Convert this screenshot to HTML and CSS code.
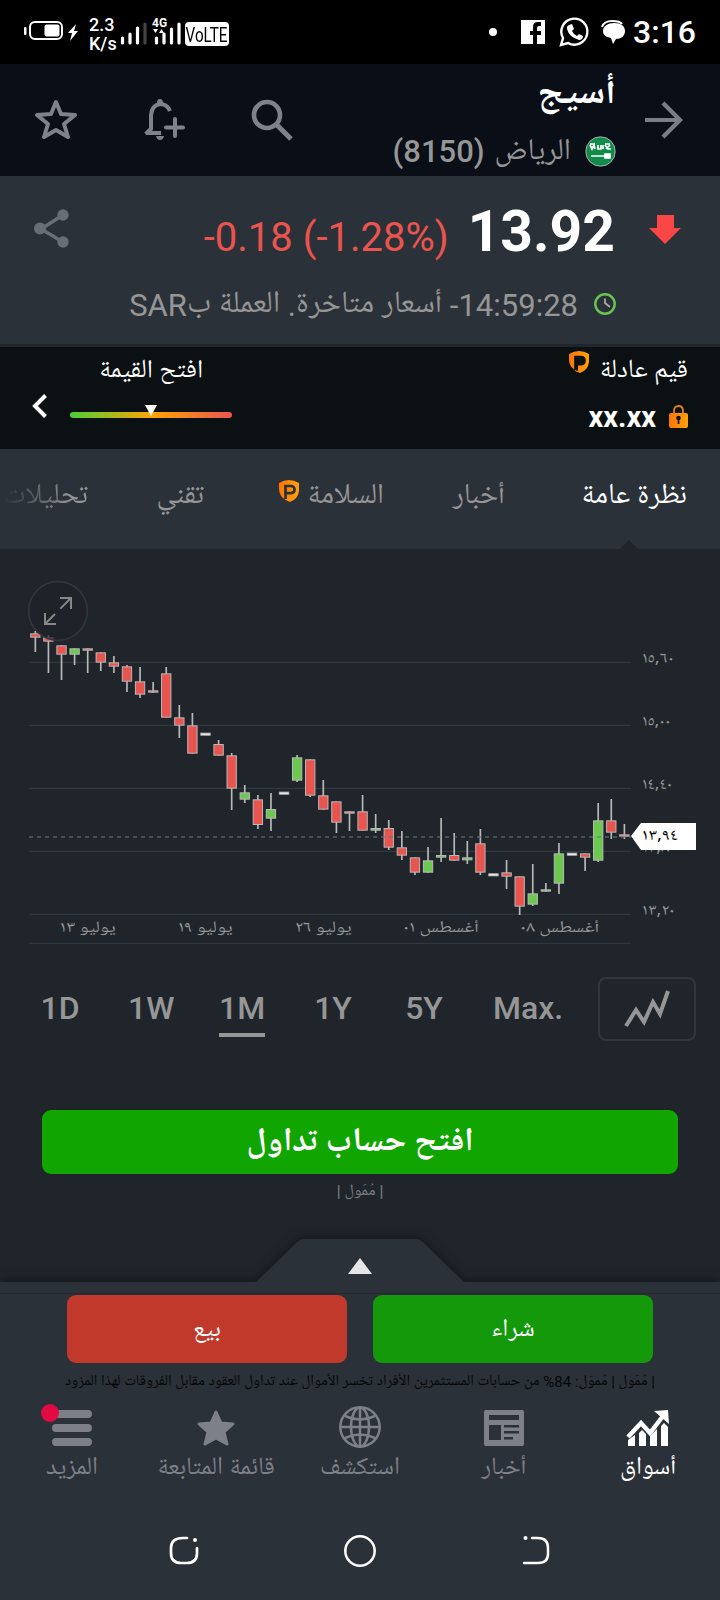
FILE: index.html
```
<!DOCTYPE html>
<html lang="ar" dir="rtl">
<head>
  <meta charset="UTF-8" />
  <meta name="viewport" content="width=device-width, initial-scale=1.0"/>
  <title>أسيج (8150)</title>
  <link rel="stylesheet" href="styles.css">
</head>
<body>
  <div class="status-bar">
    <span class="clock">3:16</span>
    <svg class="status-apps" width="142" height="34" viewBox="0 0 142 34">
      <circle cx="8" cy="17" r="4" fill="#fff"/>
      <path d="M36 5h24v24h-8v-9h4v-4h-4v-3q0-2 2-2h2V7h-3q-5 0-5 5v4h-3v4h3v9H36z" fill="#fff"/>
      <path d="M76 30l2-7a13 13 0 1 1 5 5z" fill="none" stroke="#fff" stroke-width="2.4"/>
      <path d="M84 10l3-1 2 5-2 2q2 4 5 5l2-2 4 2q0 4-4 4-10-3-12-11-.500-3 2-4z" fill="#fff"/>
      <path d="M117 12q2-6 10-6t10 3" fill="none" stroke="#fff" stroke-width="2"/>
      <path d="M129 8c7 0 11 3 11 8s-4 8-9 8l-3 5-2-6c-5-1-8-3-8-7 0-5 5-8 11-8z" fill="#fff"/>
    </svg>
    <div class="status-left">
      <svg width="58" height="34" viewBox="0 0 58 34">
        <rect x="1" y="12" width="2.500" height="8" rx="1" fill="#fff"/>
        <rect x="7" y="7" width="32" height="17" rx="5" fill="none" stroke="#fff" stroke-width="2"/>
        <rect x="21.500" y="9.500" width="15" height="12" rx="2" fill="#fff"/>
        <path d="M53 9l-8 9h4l-2 8 8-10h-4z" fill="#fff"/>
      </svg>
      <div class="speed"><span>2.3</span><span>K/s</span></div>
      <svg class="signal" width="62" height="34" viewBox="0 0 62 34">
        <path d="M2.500 22v5M10 18v9M17.500 12v15" stroke="#fff" stroke-width="3.200" stroke-linecap="round"/>
        <path d="M25 8v19" stroke="#444" stroke-width="3.200" stroke-linecap="round"/>
        <path d="M36.500 22v5M44 18v9M51.500 13v14M59 8v19" stroke="#fff" stroke-width="3.200" stroke-linecap="round"/>
        <path d="M33 13h5l-2.500 4zM39 17h5l-2.500-4z" fill="#fff"/>
        <text x="32" y="11" class="gen">4G</text>
      </svg>
      <span class="volte"><b>VoLTE</b></span>
    </div>
  </div>

  <header class="top-bar">
    <svg class="back" width="38" height="38" viewBox="0 0 38 38"><path d="M0 19h35M18 2l17 17-17 17" fill="none" stroke="#7a7f87" stroke-width="4.200"/></svg>
    <div class="name">
      <h1>أسيج</h1>
      <div class="market">
        <svg width="31" height="31" viewBox="0 0 31 31">
          <circle cx="15.500" cy="15.500" r="14.700" fill="#128a4a" stroke="#a9b0ac" stroke-width="1"/>
          <path d="M5 9l2 4 2-4 1 4M13 9v4h3v-4M18 9v4M20 9l3 4h3M21 13l4-4M5 8h5M20 8h5" stroke="#fff" stroke-width="1.700" fill="none"/>
          <path d="M6 20h19M20 18h5v4h-5z" stroke="#fff" stroke-width="1.700" fill="#fff"/>
        </svg>
        <span class="market-name">الرياض</span><span class="code" dir="ltr">(8150)</span>
      </div>
    </div>
    <div class="actions">
      <svg width="44" height="44" viewBox="0 0 44 44"><circle cx="17" cy="17" r="13" fill="none" stroke="#7e828a" stroke-width="4.600"/><path d="M27 27l14 14" stroke="#7e828a" stroke-width="5"/></svg>
      <svg width="44" height="44" viewBox="0 0 44 44" fill="none" stroke="#7e828a" stroke-width="4">
        <path d="M19 35H5l4-4V17q1-10 9-11 7 0 10 7" stroke-linejoin="round"/>
        <path d="M2 35l5-5v5z" fill="#7e828a" stroke="none"/>
        <path d="M15 5q0-4 3-4t3 4zM14 38h8q-1 4-4 4t-4-4z" fill="#7e828a" stroke="none"/>
        <path d="M33 21v17M24 29.500h17" stroke-linecap="round"/>
      </svg>
      <svg width="44" height="44" viewBox="0 0 44 44"><path d="M22 4l5 12 14 1-11 9 4 13-12-7-12 7 4-13-11-9 14-1z" fill="none" stroke="#7e828a" stroke-width="4" stroke-linejoin="round"/></svg>
    </div>
  </header>

  <section class="quote">
    <div class="quote-row">
      <svg class="down" width="32" height="29" viewBox="0 0 32 29"><path d="M8 0h17v13h7L16 29 0 13h8z" fill="#fb4646"/></svg>
      <span class="price">13.92</span>
      <span class="change" dir="ltr">-0.18 (-1.28%)</span>
      <svg class="share" width="36" height="40" viewBox="0 0 36 40"><path d="M29 6L7 20l22 13" fill="none" stroke="#696d75" stroke-width="3.500"/><circle cx="29" cy="6" r="5.700" fill="#696d75"/><circle cx="6" cy="19.500" r="6" fill="#696d75"/><circle cx="29" cy="33" r="5.700" fill="#696d75"/></svg>
    </div>
    <div class="time-row">
      <svg width="22" height="22" viewBox="0 0 22 22"><circle cx="11" cy="11" r="9.700" fill="none" stroke="#69c553" stroke-width="2.400"/><path d="M11 5.500V10l5 4" fill="none" stroke="#a5aaa5" stroke-width="1.800"/></svg>
      <span class="time-text">14:59:28- أسعار متاخرة. العملة بSAR</span>
    </div>
  </section>

  <section class="fair">
    <div class="fair-value">
      <div class="fair-title"><span>قيم عادلة</span>
        <svg class="pro" width="20" height="22" viewBox="0 0 20 22"><path d="M0 3q10-6 20 0v8q-1 8-9 11l-5-2V5h6q4 0 4 4t-4 4H9v7l-3-1Q0 15 0 9z" fill="url(#gold)" fill-rule="evenodd"/><path d="M6.500 19V6h5q4 0 4 3.600t-4 3.600h-5" fill="none" stroke="#0b1013" stroke-width="2.700"/></svg>
      </div>
      <div class="fair-price">
        <svg width="19" height="24" viewBox="0 0 19 24"><path d="M5 9V6q0-5 4.500-5T14 6v3" fill="none" stroke="#e57f10" stroke-width="1.800"/><rect y="8" width="19" height="15" rx="2" fill="url(#gold)"/><path d="M9.500 13v6" stroke="#0b1013" stroke-width="1.800"/><circle cx="9.500" cy="13" r="2.300" fill="#0b1013"/></svg>
        <span dir="ltr">xx.xx</span>
      </div>
    </div>
    <div class="unlock">
      <span>افتح القيمة</span>
      <div class="scale"><i class="marker"></i></div>
    </div>
    <svg class="chevron" width="16" height="24" viewBox="0 0 16 24"><path d="M13.500 1.500L3 12l10.500 10.500" fill="none" stroke="#fff" stroke-width="4"/></svg>
  </section>

  <nav class="tabs">
    <a class="tab active">نظرة عامة</a>
    <a class="tab news">أخبار</a>
    <a class="tab health">السلامة
      <svg class="pro" width="20" height="22" viewBox="0 0 20 22"><defs><linearGradient id="gold"><stop stop-color="#fd7506"/><stop offset="1" stop-color="#ffa10a"/></linearGradient></defs><path d="M0 3q10-6 20 0v8q-1 8-9 11Q0 18 0 9z" fill="url(#gold)"/><path d="M6.500 19V6h5q4 0 4 3.600t-4 3.600h-5" fill="none" stroke="#2b3138" stroke-width="2.700"/></svg>
    </a>
    <a class="tab tech">تقني</a>
    <a class="tab analysis">تحليلات</a>
  </nav>

  <main>
    <svg class="chart" width="720" height="390" viewBox="0 0 2160 1170">
      <g id="grid"></g>
      <g id="candles"></g>
      <path d="M87 801H1893" stroke="#6b7074" stroke-opacity=".75" stroke-width="5" stroke-dasharray="12 12"/>
      <g id="labels"></g>
      <path d="M1893 798l30-39h165v81h-165z" fill="#fff"/>
      <text x="1926" y="816" class="axis current" direction="ltr" textLength="108" lengthAdjust="spacingAndGlyphs">١٣,٩٤</text>
      <circle cx="174" cy="123" r="88" class="expand"/>
      <path d="M180 84h33v33M213 84l-32 32M135 129v33h33M135 162l30-30" fill="none" stroke="#878787" stroke-width="6"/>
    </svg>

    <div class="ranges">
      <span class="chart-type"><svg width="46" height="40" viewBox="0 0 46 40"><path d="M2 37l10-16 8 12 9-20 7 12 8-23" fill="none" stroke="#969696" stroke-width="4"/></svg></span>
      <span class="range max">Max.</span>
      <span class="range">5Y</span>
      <span class="range">1Y</span>
      <span class="range selected">1M</span>
      <span class="range">1W</span>
      <span class="range">1D</span>
    </div>

    <button class="cta"><span>افتح حساب تداول</span></button>
    <p class="sponsored">| مُمَول |</p>
    <h2 class="next-title">السعر المالي</h2>
  </main>

  <footer class="sheet">
    <svg class="handle" width="720" height="53" viewBox="0 0 720 53">
      <path d="M0 53h256l41-40q3-3 8-3h110q5 0 8 3l41 40h256v20H0z" fill="#2b3138"/>
      <path d="M360 29l12 16h-24z" fill="#e6e6e6"/>
    </svg>
    <div class="trade">
      <button class="buy"><span>شراء</span></button>
      <button class="sell"><span>بيع</span></button>
    </div>
    <p class="risk"><span>| مُمَول | مُموَل: 84% من حسابات المستثمرين الأفراد تخسر الأموال عند تداول العقود مقابل الفروقات لهذا المزود</span></p>
    <nav class="bottom-nav">
      <a class="on">
        <svg width="44" height="42" viewBox="0 0 44 42" fill="#fff"><path d="M2 40v-6l7-5v11zM13 40V27l3-3 4 4v12zM24 40V30l7-7v17zM35 40V20l3-3 4 4v19z"/><path d="M2 31l13-14 9 10 13-17" fill="none" stroke="#fff" stroke-width="4.500"/><path d="M28 5l14-1 1 14z"/></svg>
        <span>أسواق</span>
      </a>
      <a>
        <svg width="44" height="42" viewBox="0 0 44 42"><rect x="2" y="4" width="40" height="36" rx="2" fill="#7d8088"/><path d="M7 9h30v5H7zM7 19h12v15H7zM22 19h15v2.500H22zM22 25h15v2.500H22zM22 31h9v2.500h-9z" fill="#2b3138"/></svg>
        <span>أخبار</span>
      </a>
      <a>
        <svg width="44" height="42" viewBox="0 0 44 42" fill="none" stroke="#7d8088" stroke-width="2.500"><circle cx="22" cy="21" r="19.700"/><ellipse cx="22" cy="21" rx="9" ry="19.500"/><path d="M22 2v38M2 21h40M7 10q15 7 30 0M7 32q15-7 30 0"/></svg>
        <span>استكشف</span>
      </a>
      <a>
        <svg width="44" height="42" viewBox="0 0 44 42"><path d="M22 6l5 11 12 1-9 8 3 12-11-6-11 6 3-12-9-8 12-1z" fill="#7d8088" stroke="#7d8088" stroke-width="3" stroke-linejoin="round"/></svg>
        <span>قائمة المتابعة</span>
      </a>
      <a>
        <svg class="more" width="62" height="42" viewBox="0 0 62 42"><path d="M15 8h32M15 22h32M15 36h32" stroke="#7d8088" stroke-width="8" stroke-linecap="round"/><circle cx="9" cy="7" r="9" fill="#e30a44"/></svg>
        <span>المزيد</span>
      </a>
    </nav>
    <div class="system-nav">
      <svg width="32" height="32" viewBox="0 0 32 32"><path d="M12 3h6q10 0 10 10v6q0 9-10 9H4" fill="none" stroke="#fff" stroke-width="2.500" stroke-linecap="round"/><circle cx="5.500" cy="3" r="2" fill="#fff"/></svg>
      <svg width="32" height="32" viewBox="0 0 32 32"><circle cx="16" cy="16" r="14.700" fill="none" stroke="#fff" stroke-width="2.500"/></svg>
      <svg width="32" height="32" viewBox="0 0 32 32"><path d="M19 3h-4Q3 3 3 13v5q0 10 10 10h6q10 0 10-10v-5" fill="none" stroke="#fff" stroke-width="2.700" stroke-linecap="round"/><circle cx="27" cy="5" r="2" fill="#fff"/></svg>
    </div>
  </footer>

  <script>
    // colour, high, body top, body bottom, low
    const candles = [
      ["r",183,190,203,246],["r",195,202,215,309],["r",226,226,254,330],["g",235,235,254,285],["r",235,235,242,309],
      ["r",247,247,278,303],["r",258,277,290,309],["r",285,289,335,366],["r",291,334,374,384],["r",336,361,368,368],
      ["r",291,310,443,443],["r",405,442,467,504],["r",429,466,551,551],["w",492,488,497,492],["r",510,522,557,557],
      ["r",549,556,656,720],["g",645,667,689,699],["r",675,688,765,777],["g",669,717,746,783],["w",669,665,674,669],
      ["g",555,562,632,636],["r",568,568,677,681],["r",630,676,719,719],["r",694,694,758,789],["r",724,724,731,783],
      ["r",675,724,782,782],["g",732,774,782,789],["r",750,774,833,840],["r",783,832,857,870],["r",862,862,908,915],
      ["g",831,871,908,908],["g",744,855,863,876],["r",789,855,872,872],["g",813,862,871,882],["r",777,820,908,915],
      ["w",914,910,919,914],["r",870,907,920,957],["r",919,919,1010,1035],["g",882,970,1004,1008],["g",939,958,965,965],
      ["g",819,850,941,972],["w",852,848,857,852],["r",850,850,863,903],["g",699,751,872,876],["r",687,751,788,807],
      ["r",762,793,800,807]
    ];
    const fill = { r: "#e8544e", g: "#6cc84e", w: "#ffffff" };

    let out = "";
    candles.forEach(([c, high, top, bottom, low], i) => {
      const x = 106 + i * 39.27;
      out += `<path d="M${x} ${high}V${low}" stroke="#b9b9b9" stroke-width="5"/>`;
      out += `<rect x="${x - 14}" y="${top + 1.5}" width="28" height="${bottom - top - 3}" fill="${fill[c]}" stroke="#b9b9b9" stroke-width="3"/>`;
    });
    document.getElementById("candles").innerHTML = out;

    const rows = [[277, "١٥,٦٠", 95], [466, "١٥,٠٠", 86], [655, "١٤,٤٠", 91], [844, "١٣,٨٠", 98], [1033, "١٣,٢٠", 98]];
    let grid = "", labels = "";
    rows.forEach(([y, text, w]) => {
      grid += `<path d="M87 ${y}H1893" class="line"/>`;
      labels += `<text x="1926" y="${y + 9}" class="axis" direction="ltr" textLength="${w}" lengthAdjust="spacingAndGlyphs">${text}</text>`;
    });
    grid += `<path d="M87 1120H1893" class="line"/>`;

    const dates = [[263, "يوليو ١٣", 168], [616, "يوليو ١٩", 164], [970, "يوليو ٢٦", 170], [1323, "أغسطس ٠١", 228], [1679, "أغسطس ٠٨", 238]];
    dates.forEach(([x, text, w]) => {
      labels += `<text x="${x}" y="1091" class="axis date" direction="rtl" textLength="${w}" lengthAdjust="spacingAndGlyphs">${text}</text>`;
    });
    document.getElementById("grid").innerHTML = grid;
    document.getElementById("labels").innerHTML = labels;
  </script>
</body>
</html>
```
FILE: styles.css
```
* {
  box-sizing: border-box;
}

body {
  margin: 0;
  width: 720px;
  height: 1600px;
  overflow: hidden;
  background: #1f252b;
  color: #fff;
  font-family: Roboto, "Noto Naskh Arabic UI", "Noto Naskh Arabic", "Noto Sans Arabic", "DejaVu Sans", sans-serif;
}

svg {
  display: block;
  flex: none;
  overflow: visible;
}

span {
  white-space: nowrap;
}

h1, h2, p {
  margin: 0;
}

button {
  border: none;
  padding: 0;
  color: #fff;
  font-family: inherit;
}

.status-bar {
  height: 64px;
  background: #000;
  display: flex;
  align-items: center;
  padding: 0 24px 0 23px;
}

.clock {
  font-size: 32px;
  font-weight: 500;
  width: 63px;
  direction: ltr;
}

.status-apps {
  margin-right: 6px;
}

.status-left {
  direction: ltr;
  display: flex;
  align-items: center;
  margin-right: auto;
}

.speed {
  display: flex;
  flex-direction: column;
  font-size: 18px;
  line-height: 19px;
  font-weight: 500;
  width: 39px;
  padding: 3px 0 0 8px;
}

.signal {
  margin: 2px 0 0 0;
}

.gen {
  font: 700 12px Roboto;
  fill: #fff;
}

.volte {
  width: 44px;
  height: 24px;
  margin: 4px 0 0 3px;
  border-radius: 4px;
  background: #fff;
  color: #000;
  font-size: 20px;
  line-height: 26px;
  display: flex;
  justify-content: center;
}

.volte b {
  font-weight: 400;
  transform: scaleX(.76);
}

.top-bar {
  height: 112px;
  background: #0a0e16;
  display: flex;
  align-items: center;
  padding: 0 37px 0 34px;
}

.name {
  margin-right: 29px;
  height: 112px;
}

h1 {
  font-size: 38px;
  line-height: 62px;
  height: 68px;
}

.market {
  display: flex;
  align-items: center;
  height: 38px;
  font-size: 30px;
  color: #969696;
}

.market-name {
  margin: 0 14px 0 10px;
}

.code {
  font-weight: 500;
  font-size: 31px;
}

.actions {
  display: flex;
  gap: 64px;
  margin-right: auto;
}

.quote {
  height: 171px;
  background: #2b3138;
  border-bottom: 3px solid #20262b;
  padding: 0 39px 0 34px;
}

.quote-row {
  display: flex;
  height: 106px;
  align-items: center;
}

.price {
  font-size: 57px;
  font-weight: 700;
  margin: 4px 34px 0 0;
}

.change {
  color: #e9554e;
  font-size: 40px;
  margin: 16px 19px 0 0;
}

.share {
  margin-right: auto;
}

.time-row {
  display: flex;
  align-items: center;
  height: 44px;
  padding-right: 65px;
  color: #969696;
  font-size: 31px;
  gap: 16px;
}

.fair {
  height: 102px;
  background: #0b1013;
  display: flex;
  padding: 0 32px;
  font-size: 26px;
}

.fair-value {
  width: 160px;
}

.fair-title {
  display: flex;
  gap: 10px;
  height: 50px;
  line-height: 50px;
}

.pro {
  margin-top: 4px;
}

.fair-price {
  display: flex;
  align-items: center;
  gap: 13px;
  height: 40px;
  font-size: 29px;
  font-weight: 700;
}

.unlock {
  width: 162px;
  margin-right: auto;
  text-align: center;
  line-height: 50px;
}

.scale {
  height: 6px;
  margin-top: 15px;
  border-radius: 3px;
  background: linear-gradient(to right, #48cf38, #ffa500 50%, #e9554e);
  display: flex;
  justify-content: center;
}

.marker {
  border: 6px solid transparent;
  border-top: 11px solid #fff;
  margin-top: -7px;
}

.chevron {
  margin: 47px 22px 0 0;
}

.tabs {
  height: 100px;
  background: #2b3138;
  display: flex;
  align-items: center;
  padding-right: 33px;
  overflow: hidden;
  font-size: 29px;
  color: #969696;
}

.tab {
  flex: none;
  position: relative;
  display: flex;
  gap: 8px;
  white-space: nowrap;
  height: 100px;
  line-height: 96px;
}

.tab.active {
  color: #fff;
  width: 115px;
}

.tab.active::after {
  content: "";
  position: absolute;
  bottom: 0;
  left: 48px;
  border: 9px solid transparent;
  border-top: 0;
  border-bottom-color: #1f252b;
}

.tab .pro {
  margin-top: 31px;
}

.news {
  width: 55px;
  margin-right: 67px;
}

.health {
  width: 110px;
  margin-right: 66px;
}

.tech {
  width: 51px;
  margin-right: 70px;
}

.analysis {
  margin-right: 65px;
  background: linear-gradient(to right, #2b3138, #969696 70px);
  -webkit-background-clip: text;
  background-clip: text;
  color: transparent;
}

main {
  height: 733px;
  padding-top: 21px;
  overflow: hidden;
}

.line {
  stroke: #343d44;
  stroke-width: 3;
}

.axis {
  font-family: "Noto Naskh Arabic UI", "Noto Sans Arabic", "DejaVu Sans", sans-serif;
  font-size: 48px;
  fill: #969696;
}

.date {
  text-anchor: middle;
}

.current {
  fill: #000;
}

.expand {
  fill: #20222a;
  fill-opacity: .7;
  stroke: #31353d;
  stroke-width: 5;
}

.ranges {
  display: flex;
  align-items: center;
  height: 64px;
  margin-top: 17px;
  padding-right: 24px;
  color: #969696;
  font-size: 32px;
  font-weight: 500;
  direction: rtl;
}

.chart-type {
  width: 98px;
  height: 64px;
  border: 2px solid #31353d;
  border-radius: 8px;
  display: flex;
  align-items: center;
  justify-content: center;
}

.range {
  width: 46px;
  margin-right: 45px;
  height: 55px;
  line-height: 52px;
  text-align: center;
  direction: ltr;
}

.range.max {
  width: 72px;
  margin-right: 34px;
}

.selected {
  border-bottom: 4px solid #969696;
}

.cta {
  display: block;
  width: 636px;
  height: 64px;
  margin: 69px auto 0;
  border-radius: 9px;
  background: #10a500;
  font-size: 33px;
  font-weight: 700;
}

.sponsored {
  text-align: center;
  font-size: 16px;
  line-height: 36px;
  color: #7c7f82;
}

.next-title {
  font-size: 28px;
  margin: 65px 46px 0 0;
  font-weight: 400;
}

.sheet {
  position: relative;
  height: 318px;
  background: #2b3138;
}

.handle {
  margin-top: -53px;
  position: absolute;
  filter: drop-shadow(0 -3px 4px #15191e);
  clip-path: inset(-20px 0 0 0);
}

.trade {
  display: flex;
  gap: 26px;
  margin-top: 11px;
  position: absolute;
  width: 720px;
  padding: 1px 67px 0;
  border-top: 1px solid #23282f;
}

.trade button {
  width: 280px;
  height: 68px;
  border-radius: 9px;
  font-size: 25px;
}

.buy {
  background: #14990a;
}

.sell {
  background: #c1392b;
}

.risk {
  padding: 85px 46px 0;
  text-align: center;
  height: 124px;
  line-height: 30px;
  font-size: 15px;
  color: #050608;
  display: flex;
  justify-content: center;
}

.bottom-nav {
  display: flex;
  color: #7d8088;
  font-size: 25px;
}

.bottom-nav a {
  width: 144px;
  display: flex;
  flex-direction: column;
  align-items: center;
  line-height: 42px;
}

.on {
  color: #fff;
}

.system-nav {
  display: flex;
  justify-content: center;
  gap: 144px;
  padding-top: 45px;
}
```
